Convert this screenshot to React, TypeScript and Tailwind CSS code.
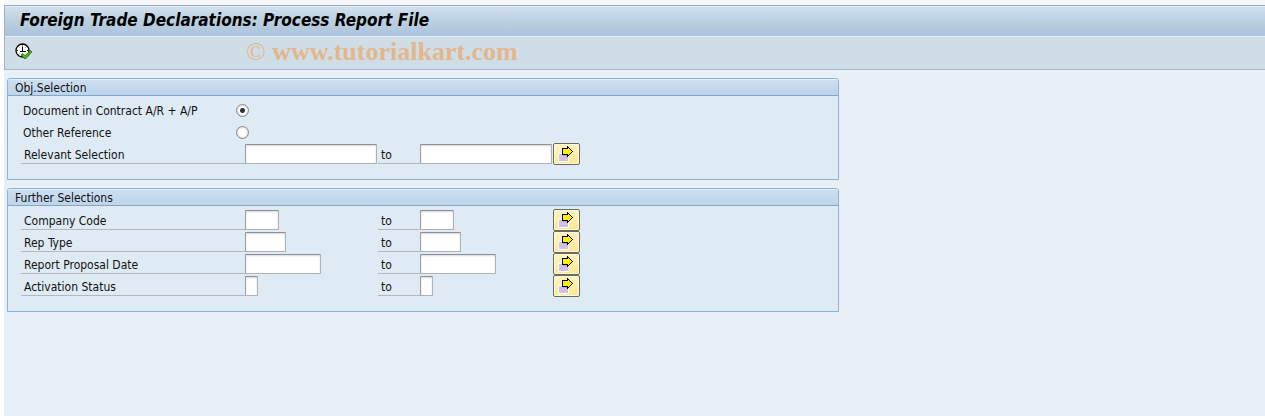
import { useState } from "react"
import type { ReactNode } from "react"

interface RangeField {
  id: string
  label: string
  size: string
}

const furtherSelections: RangeField[] = [
  { id: "company-code", label: "Company Code", size: "w-[34px]" },
  { id: "rep-type", label: "Rep Type", size: "w-[41px]" },
  { id: "proposal-date", label: "Report Proposal Date", size: "w-[76px]" },
  { id: "activation-status", label: "Activation Status", size: "w-[13px]" },
]

const objectTypes = [
  { id: "contract", label: "Document in Contract A/R + A/P" },
  { id: "other", label: "Other Reference" },
]

function ExecuteIcon() {
  return (
    <svg width="18" height="18" viewBox="0 0 18 18" aria-hidden="true">
      <circle cx="7.5" cy="7.5" r="6.5" fill="#fff" stroke="#000" strokeWidth="1.3" />
      <path
        d="M7.5 3.5v5M5 8.5h6M7.5 1.5v1M2 7.5h1M12 7.5h1M3.5 3.5l.7.7M11.5 3.5l-.7.7M3.5 11.5l.7-.7"
        fill="none"
        stroke="#000"
      />
      <path d="M6 11.8l1.8-1.2 2.2 2.2L15.3 7.5l1.7 1.3L11 15.5H9.3z" fill="#4fb41c" stroke="#1f640d" strokeWidth="0.8" />
    </svg>
  )
}

function MultipleSelectionIcon() {
  return (
    <svg width="16" height="16" viewBox="0 0 16 16" shapeRendering="crispEdges" aria-hidden="true">
      <path d="M0 7h11v9H0z" fill="#fff" />
      <path d="M1 8h9v7H1z" fill="#d3bfdf" />
      <path d="M5 9h4v1H5z" fill="#8fb0de" />
      <path
        d="M4 2h5V0h1v1h1v1h1v1h1v1h1v1h1v1h-1v1h-1v1h-1v1h-1v1h-1v1H9V9H4z"
        fill="#000"
      />
      <path d="M5 3h5V2h1v1h1v1h1v1h1v1h-1v1h-1v1h-1v1h-1V8H5z" fill="#ffee00" />
    </svg>
  )
}

function GroupBox({ id, title, children }: { id: string; title: string; children: ReactNode }) {
  return (
    <section
      aria-labelledby={id}
      className="w-full max-w-[832px] rounded-t-[3px] border border-[#8fb1d1] bg-[#deebf4]"
    >
      <h2
        id={id}
        className="flex h-[17px] items-center rounded-t-[2px] border-t border-b border-t-[#e6f0f9] border-b-[#86a6c8] bg-linear-to-b from-[#cddfef] to-[#bdd4ea] pl-[7px] leading-[14px]"
      >
        {title}
      </h2>
      <div className="pt-[3px] pr-3 pb-[14px] pl-[13px]">{children}</div>
    </section>
  )
}

function TextField({ id, size, label }: { id: string; size: string; label?: string }) {
  return (
    <input
      id={id}
      type="text"
      aria-label={label}
      className={`${size} h-5 rounded-[1px] border border-t-[#8f9094] border-r-[#b0b1b4] border-b-[#b0b1b4] border-l-[#9b9ca0] bg-white px-px shadow-[inset_0_1px_2px_#d6d8dc] outline-none focus:bg-[#fff8d2]`}
    />
  )
}

function RangeRow({ id, label, size }: RangeField) {
  return (
    <div className="grid h-[22px] grid-cols-[224px_133px_42px_133px_27px] items-center">
      <label htmlFor={`${id}-low`} className="flex h-5 items-center border-b border-[#b3b8be] pt-[3px] pl-[3px]">
        {label}
      </label>
      <TextField id={`${id}-low`} size={size} />
      <label htmlFor={`${id}-high`} className="flex h-5 items-center border-b border-[#b3b8be] pt-[3px] pl-[3px]">
        to
      </label>
      <TextField id={`${id}-high`} size={size} label={`${label} to`} />
      <button
        type="button"
        aria-label={`Multiple selection for ${label}`}
        className="flex h-[22px] w-[27px] rounded-[2px] border border-[#6d6b60] bg-linear-to-b from-[#fff5c4] to-[#fce78e] pt-[2px] pl-1 shadow-[inset_0_0_0_1px_#fff9dc] active:to-[#f5d864]"
      >
        <MultipleSelectionIcon />
      </button>
    </div>
  )
}

export default function App() {
  const [objectType, setObjectType] = useState("contract")

  return (
    <div className="min-h-screen bg-white pl-1 font-['DejaVu_Sans_Condensed','DejaVu_Sans',sans-serif] text-[12px] leading-4 text-[#111]">
      <div className="h-[5px] bg-[#f5f7fb]" />
      <div className="min-h-[calc(100vh-5px)] bg-[#e8f0f7]">
        <header className="border-t border-b border-l border-t-[#a0abbf] border-b-[#a5b7c8] border-l-[#9fb1c6] bg-[#cfdde7]">
          <div className="flex h-[31px] items-center border-t border-b border-t-[#e4edf5] border-b-[#e9f1f7] bg-linear-to-b from-[#d1e0ed] via-[#bacfdf] to-[#abc3dd] pb-[3px] pl-[15px]">
            <h1 className="text-[17px] font-bold text-black italic">Foreign Trade Declarations: Process Report File</h1>
          </div>
          <div className="flex h-8 items-center pb-[2px] pl-[10px]">
            <button type="button" aria-label="Execute" className="flex">
              <ExecuteIcon />
            </button>
            <p className="ml-[213px] font-['Liberation_Serif',serif] text-[26px] leading-6 font-bold text-[#e3b78b]">
              <span className="font-normal">©</span> www.tutorialkart.com
            </p>
          </div>
        </header>

        <main className="flex flex-col gap-2 px-[3px] pt-2">
          <GroupBox id="object-selection" title="Obj.Selection">
            {objectTypes.map((type) => (
              <div key={type.id} className="flex h-[22px] items-center">
                <label htmlFor={type.id} className="w-[215px] pt-px pl-[2px]">
                  {type.label}
                </label>
                <input
                  id={type.id}
                  type="radio"
                  name="object-type"
                  checked={objectType === type.id}
                  onChange={() => setObjectType(type.id)}
                  className="size-[13px] appearance-none rounded-full border border-[#85878b] bg-white shadow-[inset_0_0_1px_1px_#dcdde0] checked:bg-[radial-gradient(circle,#2b2d40_2px,#fff_3px)]"
                />
              </div>
            ))}
            <RangeRow id="relevant" label="Relevant Selection" size="w-[132px]" />
          </GroupBox>

          <GroupBox id="further-selections" title="Further Selections">
            {furtherSelections.map((field) => (
              <RangeRow key={field.id} {...field} />
            ))}
          </GroupBox>
        </main>
      </div>
    </div>
  )
}
